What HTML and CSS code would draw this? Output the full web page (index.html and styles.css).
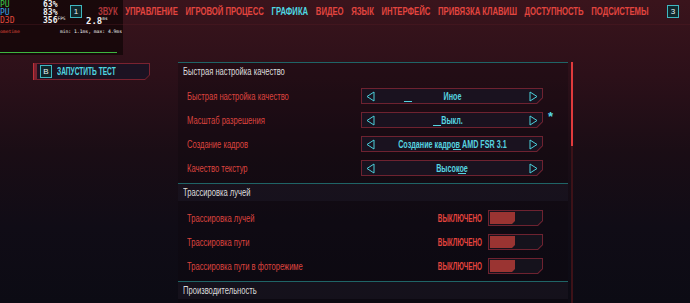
FILE: index.html
```html
<!DOCTYPE html>
<html lang="ru">
<head>
  <meta charset="utf-8">
  <title>Графика</title>
  <link rel="stylesheet" href="styles.css">
</head>
<body>

  <div class="perf">
    <div class="perf-line"><span class="tag green">PU</span><span class="val">63%</span></div>
    <div class="perf-line"><span class="tag blue">PU</span><span class="val">83%</span></div>
    <div class="perf-line"><span class="tag red">D3D</span><span class="val">356<sup>FPS</sup></span><span class="ms">2.8<sup>ms</sup></span></div>
    <div class="perf-small"><span class="red">ometime</span><span>min: 1.1ms, max: 4.9ms</span></div>
    <div class="perf-graph"></div>
  </div>

  <div class="topbar">
    <span class="key">1</span>
    <nav class="tabs">
      <div class="tabs-track">
        <span class="tab dim">ЗВУК</span>
        <span class="tab">УПРАВЛЕНИЕ</span>
        <span class="tab">ИГРОВОЙ ПРОЦЕСС</span>
        <span class="tab active">ГРАФИКА</span>
        <span class="tab">ВИДЕО</span>
        <span class="tab">ЯЗЫК</span>
        <span class="tab">ИНТЕРФЕЙС</span>
        <span class="tab">ПРИВЯЗКА КЛАВИШ</span>
        <span class="tab">ДОСТУПНОСТЬ</span>
        <span class="tab">ПОДСИСТЕМЫ</span>
      </div>
    </nav>
    <span class="key">3</span>
  </div>

  <div class="content">
    <div class="side">
      <div class="launch">
        <div class="launch-inner">
          <span class="key small">B</span>
          <span class="launch-text">ЗАПУСТИТЬ ТЕСТ</span>
        </div>
      </div>
    </div>

    <div class="panel">
      <div class="section">
        <div class="section-head"><span class="cond">Быстрая настройка качество</span></div>
        <div class="rows">
          <div class="row">
            <span class="label">Быстрая настройка качество</span>
            <div class="sel"><div class="sel-inner">
              <svg class="arrow" viewBox="0 0 9 11"><path d="M8 1 L1 5.5 L8 10 Z" /></svg>
              <span class="sel-value">Иное</span>
              <svg class="arrow" viewBox="0 0 9 11"><path d="M1 1 L8 5.5 L1 10 Z" /></svg>
              <span class="cursor c1"></span>
            </div></div>
            <span class="mark"></span>
          </div>
          <div class="row">
            <span class="label">Масштаб разрешения</span>
            <div class="sel"><div class="sel-inner">
              <svg class="arrow" viewBox="0 0 9 11"><path d="M8 1 L1 5.5 L8 10 Z" /></svg>
              <span class="sel-value">Выкл.</span>
              <svg class="arrow" viewBox="0 0 9 11"><path d="M1 1 L8 5.5 L1 10 Z" /></svg>
              <span class="cursor c2"></span>
            </div></div>
            <span class="mark">*</span>
          </div>
          <div class="row">
            <span class="label">Создание кадров</span>
            <div class="sel"><div class="sel-inner">
              <svg class="arrow" viewBox="0 0 9 11"><path d="M8 1 L1 5.5 L8 10 Z" /></svg>
              <span class="sel-value">Создание кадров AMD FSR 3.1</span>
              <svg class="arrow" viewBox="0 0 9 11"><path d="M1 1 L8 5.5 L1 10 Z" /></svg>
              <span class="cursor c3"></span>
            </div></div>
            <span class="mark"></span>
          </div>
          <div class="row">
            <span class="label">Качество текстур</span>
            <div class="sel"><div class="sel-inner">
              <svg class="arrow" viewBox="0 0 9 11"><path d="M8 1 L1 5.5 L8 10 Z" /></svg>
              <span class="sel-value">Высокое</span>
              <svg class="arrow" viewBox="0 0 9 11"><path d="M1 1 L8 5.5 L1 10 Z" /></svg>
              <span class="cursor c4"></span>
            </div></div>
            <span class="mark"></span>
          </div>
        </div>
      </div>

      <div class="section">
        <div class="section-head shade"><span class="cond">Трассировка лучей</span></div>
        <div class="rows">
          <div class="row">
            <span class="label">Трассировка лучей</span>
            <span class="state">ВЫКЛЮЧЕНО</span>
            <div class="toggle"><div class="toggle-inner"><span class="knob"></span></div></div>
            <span class="mark"></span>
          </div>
          <div class="row">
            <span class="label">Трассировка пути</span>
            <span class="state">ВЫКЛЮЧЕНО</span>
            <div class="toggle"><div class="toggle-inner"><span class="knob"></span></div></div>
            <span class="mark"></span>
          </div>
          <div class="row">
            <span class="label">Трассировка пути в фоторежиме</span>
            <span class="state">ВЫКЛЮЧЕНО</span>
            <div class="toggle"><div class="toggle-inner"><span class="knob"></span></div></div>
            <span class="mark"></span>
          </div>
        </div>
      </div>

      <div class="section">
        <div class="section-head shade"><span class="cond">Производительность</span></div>
      </div>
    </div>

    <div class="scroll"><div class="scroll-thumb"></div></div>
  </div>

</body>
</html>
```

FILE: styles.css
```css
body {
  margin: 0;
  width: 690px;
  height: 303px;
  overflow: hidden;
  position: relative;
  background: linear-gradient(180deg, #3a141c 0%, #2c1019 25%, #1a0d15 50%, #100c16 75%, #0c0b14 100%);
  font-family: "Liberation Sans", Arial, sans-serif;
  color: #d94540;
}

/* the game font is condensed, so text gets squeezed */
.cond,
.label,
.sel-value,
.state,
.launch-text {
  display: inline-block;
  white-space: nowrap;
  transform-origin: left center;
}

/* fps overlay */
.perf {
  position: absolute;
  top: 0;
  left: 0;
  width: 123px;
  height: 55px;
  background: rgba(22, 8, 10, 0.9);
  font-family: "DejaVu Sans Mono", monospace;
  font-weight: bold;
  color: #f2f2f2;
  z-index: 2;
}
.perf-line {
  display: flex;
  height: 8px;
  font-size: 8px;
  line-height: 8px;
}
.perf-line:first-child {
  margin-top: 1px;
}
.perf .tag {
  width: 43px;
  font-weight: normal;
}
.perf .val {
  width: 43px;
}
.perf .ms {
  font-size: 9px;
  line-height: 8px;
}
.perf sup {
  font-size: 4.5px;
  line-height: 4px;
  vertical-align: top;
  font-weight: normal;
}
.perf-small {
  display: flex;
  justify-content: space-between;
  font-size: 4.7px;
  line-height: 5px;
  font-weight: normal;
  margin-top: 4px;
  padding-right: 1px;
}
.perf-graph {
  margin-top: 18px;
  width: 117px;
  height: 1px;
  background: #3fb53f;
}
.green { color: #3ccb4c; }
.blue { color: #3aa3e6; }
.red { color: #e0483c; }

/* top navigation */
.topbar {
  position: relative;
  z-index: 3;
  display: flex;
  align-items: center;
  height: 23px;
  padding-bottom: 1px;
  padding-left: 70px;
  border-bottom: 1px solid rgba(90, 30, 38, 0.35);
}
.tabs {
  flex: none;
  width: 552px;
  margin-left: 16px;
  margin-right: 17px;
}
.tabs-track {
  display: flex;
  gap: 11px;
  width: max-content;
  transform: scaleX(0.7);
  transform-origin: left center;
}
.tab {
  font-size: 11px;
  line-height: 9px;
  font-weight: bold;
  color: #e2453f;
}
.tab.dim {
  color: #b0363a;
}
.tab.active {
  color: #4ed8e2;
}
.key {
  display: inline-flex;
  align-items: center;
  justify-content: center;
  flex: none;
  width: 10px;
  height: 11px;
  border: 1px solid #3fb7c0;
  background: #10282c;
  color: #e8f4f4;
  font-size: 8px;
}

/* content */
.content {
  display: flex;
  padding-top: 37px;
}
.side {
  width: 178px;
}
.launch {
  margin-left: 33px;
  margin-top: 1px;
  width: 117px;
  height: 17px;
  background: #7a2230;
  padding: 1px 1px 1px 3px;
  box-sizing: border-box;
  border-left: 1px solid #c03038;
  clip-path: polygon(0 0, 100% 0, 100% calc(100% - 5px), calc(100% - 5px) 100%, 0 100%);
}
.launch-inner {
  display: flex;
  align-items: center;
  gap: 5px;
  height: 100%;
  padding-left: 3px;
  background: #1c1222;
  clip-path: polygon(0 0, 100% 0, 100% calc(100% - 4px), calc(100% - 4px) 100%, 0 100%);
}
.launch-text {
  font-size: 10px;
  font-weight: bold;
  color: #4fd6e0;
  transform: scaleX(0.66);
}

.panel {
  width: 390px;
  background: rgba(12, 8, 14, 0.3);
}
.section {
  border-top: 1px solid #1f6466;
}
.section-head {
  height: 20px;
  line-height: 18px;
  padding-left: 5px;
  font-size: 10px;
  color: #dcdcdc;
}
.section-head .cond {
  transform: scaleX(0.76);
}
.section-head.shade {
  height: 17px;
  line-height: 17px;
  background: rgba(40, 36, 52, 0.3);
}
.rows {
  padding: 1px 0 3px;
}
.section-head.shade + .rows {
  padding: 5px 0 3px;
}
.row {
  display: flex;
  align-items: center;
  height: 24px;
  padding-left: 9px;
}
.label {
  flex: 1;
  font-size: 10px;
  color: #dc433e;
  transform: scaleX(0.76);
}
.mark {
  flex: none;
  width: 25px;
  padding-left: 5px;
  box-sizing: border-box;
  color: #56d8e4;
  font-size: 13px;
  font-weight: bold;
  align-self: flex-start;
  line-height: 18px;
}

/* selector */
.sel {
  flex: none;
  width: 182px;
  height: 16px;
  padding: 1px;
  box-sizing: border-box;
  background: #6e2230;
  clip-path: polygon(0 0, 100% 0, 100% calc(100% - 6px), calc(100% - 6px) 100%, 0 100%);
}
.sel-inner {
  position: relative;
  display: flex;
  align-items: center;
  justify-content: space-between;
  height: 100%;
  padding: 0 4px;
  background: #1a121f;
  clip-path: polygon(0 0, 100% 0, 100% calc(100% - 5.5px), calc(100% - 5.5px) 100%, 0 100%);
}
.arrow {
  flex: none;
  width: 9px;
  height: 11px;
}
.arrow path {
  fill: none;
  stroke: #4ad0dc;
  stroke-width: 1;
}
.sel-value {
  font-size: 10px;
  font-weight: bold;
  color: #56d4e0;
  transform: scaleX(0.72);
  transform-origin: center;
}
.cursor {
  position: absolute;
  bottom: 1px;
  width: 8px;
  height: 1px;
  background: #56d4e0;
}
.c1 { left: 42px; }
.c2 { left: 71px; }
.c3 { left: 91px; }
.c4 { left: 96px; }

/* toggle */
.state {
  margin-right: 6px;
  font-size: 10px;
  font-weight: bold;
  color: #e4443e;
  transform: scaleX(0.64);
  transform-origin: right center;
}
.toggle {
  flex: none;
  width: 55px;
  height: 16px;
  padding: 1px;
  box-sizing: border-box;
  background: #6e2230;
  clip-path: polygon(0 0, 100% 0, 100% calc(100% - 5px), calc(100% - 5px) 100%, 0 100%);
}
.toggle-inner {
  height: 100%;
  padding: 1px;
  box-sizing: border-box;
  background: #15121c;
  clip-path: polygon(0 0, 100% 0, 100% calc(100% - 4.5px), calc(100% - 4.5px) 100%, 0 100%);
}
.knob {
  display: block;
  width: 25px;
  height: 100%;
  background: #9a3432;
  clip-path: polygon(0 0, 100% 0, 100% calc(100% - 3px), calc(100% - 3px) 100%, 0 100%);
}

/* scrollbar */
.scroll {
  margin-left: 3px;
  width: 2px;
  height: 241px;
  background: #3c1218;
}
.scroll-thumb {
  height: 84px;
  background: #e03a3c;
}
```
